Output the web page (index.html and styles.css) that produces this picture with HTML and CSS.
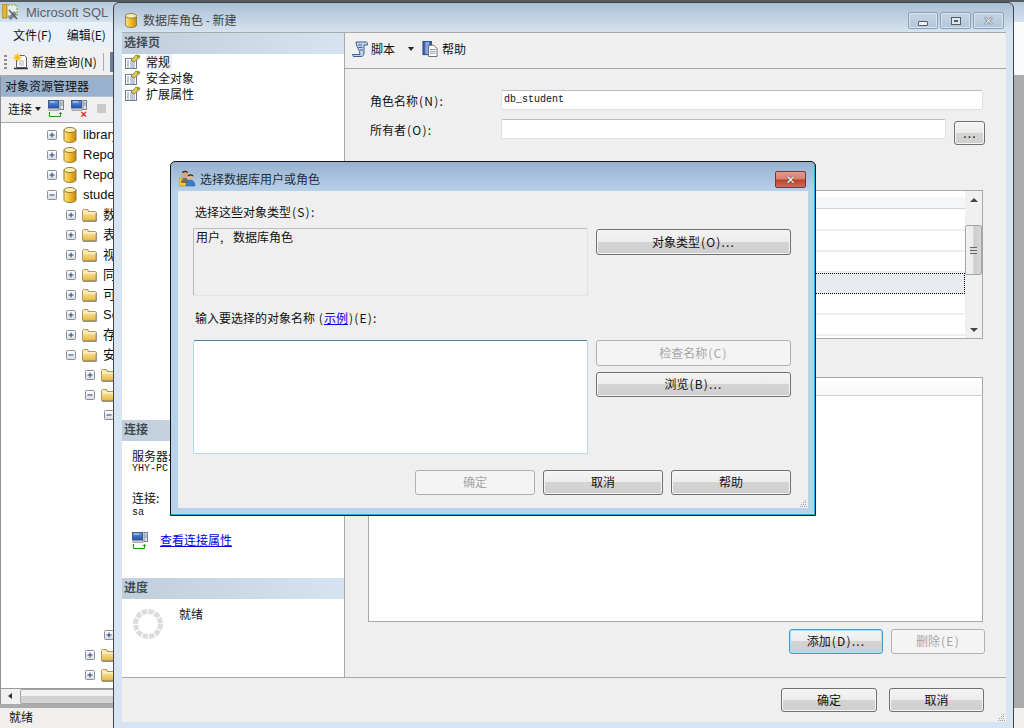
FILE: index.html
```html
<!DOCTYPE html>
<html lang="zh-CN">
<head>
<meta charset="utf-8">
<title>数据库角色 - 新建</title>
<link rel="stylesheet" href="styles.css">
</head>
<body>
<svg class="defs" width="0" height="0" aria-hidden="true">
  <defs>
    <linearGradient id="gold" x1="0" x2="1" y1="0" y2="0"><stop offset="0" stop-color="#f9e48e"/><stop offset=".45" stop-color="#f3bf2c"/><stop offset="1" stop-color="#c58a10"/></linearGradient>
    <linearGradient id="fold" x1="0" x2="0" y1="0" y2="1"><stop offset="0" stop-color="#fdf1c0"/><stop offset="1" stop-color="#e9b93f"/></linearGradient>
    <linearGradient id="expb" x1="0" x2="0" y1="0" y2="1"><stop offset="0" stop-color="#fff"/><stop offset="1" stop-color="#d8dbe0"/></linearGradient>
    <linearGradient id="scr" x1="0" x2="0" y1="0" y2="1"><stop offset="0" stop-color="#5d9be6"/><stop offset="1" stop-color="#1d4fb0"/></linearGradient>
    <symbol id="db" viewBox="0 0 13 16"><path d="M.5 3v10c0 1.4 2.7 2.5 6 2.5s6-1.100 6-2.500V3z" fill="url(#gold)" stroke="#8d7a43"/><ellipse cx="6.500" cy="3" rx="6" ry="2.500" fill="#fbeeb0" stroke="#8d7a43"/></symbol>
    <symbol id="folder" viewBox="0 0 15 13"><path d="M1 12.500V2l1-1h4l1 2h7l.5 1v8.500z" fill="#2a2418"/><path d="M.5 11.500V1.500l1-1h4l1 2h7l.5.500v8.500z" fill="url(#fold)" stroke="#b1975a"/><path d="M1 4h13" stroke="#fff8dc"/></symbol>
    <symbol id="plus" viewBox="0 0 10 10"><rect x=".5" y=".5" width="9" height="9" rx="1" fill="url(#expb)" stroke="#8b8f97"/><path d="M2.500 5h5M5 2.500v5" stroke="#27407f"/></symbol>
    <symbol id="minus" viewBox="0 0 10 10"><rect x=".5" y=".5" width="9" height="9" rx="1" fill="url(#expb)" stroke="#8b8f97"/><path d="M2.500 5h5" stroke="#27407f"/></symbol>
    <symbol id="prop" viewBox="0 0 16 16"><rect x=".5" y="4.500" width="11" height="10" fill="#fff" stroke="#6d7d94"/><path d="M2 7h2M5 7h5M2 9h2M5 9h5M2 11h2M5 11h5M2 13h2M5 13h5" stroke="#7d93bd"/><path d="M6 6l5-5 4 1-1 2-5 4z" fill="#e7c64a" stroke="#6f6a2b" stroke-width=".7"/><path d="M11 1l4 1-2 2z" fill="#7aa33a"/></symbol>
    <symbol id="conn" viewBox="0 0 16 12"><rect x=".5" y=".5" width="10" height="7.500" fill="url(#scr)" stroke="#4a5a78"/><path d="M2 2h5" stroke="#cfe4ff"/><rect x="1" y="8.500" width="10" height="2" fill="#c8ccd4" stroke="#7c8496" stroke-width=".6"/><rect x="12" y=".5" width="3.500" height="9" fill="#e2e5ea" stroke="#79808e"/><path d="M13 3h1.500M13 5h1.500" stroke="#3a6fb8"/></symbol>
    <symbol id="arrowlink" viewBox="0 0 16 5"><path d="M1.500 0v4.500h11V1" fill="none" stroke="#1c9a12"/><path d="M10.500 2l2-2 2 2z" fill="#1c9a12"/></symbol>
    <symbol id="scrolli" viewBox="0 0 16 16"><path d="M4 1h10c1 0 1.500.7 1.500 1.500V4H12v8c0 1.800-1 3.500-3 3.500H2C.8 15.500.5 14.500.5 13.500H8c0-5-4-7-4-12.500z" fill="#c4d3ea" stroke="#3f5e8f"/><path d="M6 4h4M6.500 6.500h4M8 9h3" stroke="#3f5e8f"/></symbol>
    <symbol id="helpi" viewBox="0 0 16 17"><rect x=".5" y=".5" width="9" height="14" fill="#3f66ae" stroke="#2b4683"/><rect x="3" y="1" width="4" height="13" fill="#8aa7d8"/><path d="M6.500 4.500h5.500l3.500 3.500v8.500h-9z" fill="#fff" stroke="#5c6677"/><path d="M8 9h6M8 11h6M8 13h6" stroke="#8f98a8"/></symbol>
    <symbol id="people" viewBox="0 0 17 17"><rect x="0" y="8" width="7" height="8" rx="1" fill="#f0c93c" stroke="#a08720" stroke-width=".6"/><circle cx="6" cy="4" r="3.200" fill="#d9a779"/><path d="M3 3c0-3 6-3 6 0l-3-1z" fill="#32241a"/><path d="M2 13c0-3 2-5 4-5s4 2 4 5z" fill="#7a6a50"/><circle cx="11.500" cy="7" r="2.800" fill="#e5b68a"/><path d="M8.500 6.500c0-3 6-3 6 0l-3-1z" fill="#32241a"/><path d="M7 16c0-3.500 2-6 4.500-6s4.500 2.500 4.500 6z" fill="#3f7cc6" stroke="#2a5a99" stroke-width=".5"/></symbol>
    <symbol id="appi" viewBox="0 0 16 16"><rect x="3" y="1" width="12" height="11" fill="#e9efe2" stroke="#79a04a" stroke-dasharray="2 1"/><rect x="0" y="0" width="5" height="14" fill="#e4b331" stroke="#8c7526" stroke-width=".7"/><path d="M6 14l6-7 3 3-6 6z" fill="#7e8794"/><path d="M7 6l8 9" stroke="#555d68" stroke-width="1.500"/></symbol>
    <symbol id="newq" viewBox="0 0 16 17"><path d="M3.500 2.500h8l2 2v10h-10z" fill="#fff" stroke="#59616e"/><path d="M1 15.500h14" stroke="#2e343c" stroke-width="1.500"/><path d="M6 8h5M6 10h5M6 12h5" stroke="#aab2bf"/><circle cx="4.500" cy="4.500" r="3" fill="#f6d43c"/><path d="M4.500 0v9M0 4.500h9M1.500 1.500l6 6M7.500 1.500l-6 6" stroke="#f2b71f" stroke-width=".8"/></symbol>
    <symbol id="grip" viewBox="0 0 7 7"><path d="M5 0h1v1H5zM3 2h1v1H3zM5 2h1v1H5zM1 4h1v1H1zM3 4h1v1H3zM5 4h1v1H5zM0 6h1v1H0zM2 6h1v1H2zM4 6h1v1H4zM6 6h1v1H6z" fill="#9c9c9c"/></symbol>
  </defs>
</svg>

<section class="win app">
  <header class="app-title">
    <svg class="ic16"><use href="#appi"/></svg>
    <span class="app-name">Microsoft SQL</span>
  </header>
  <nav class="app-menu"><span>文件(F)</span><span>编辑(E)</span></nav>
  <div class="app-tools">
    <span class="gripper"></span>
    <svg class="ic-newq"><use href="#newq"/></svg>
    <span>新建查询(N)</span>
    <span class="tool-sep"></span>
  </div>
  <div class="app-body">
    <aside class="explorer">
      <div class="exp-head">对象资源管理器</div>
      <div class="exp-tools">
        <span>连接</span><span class="caret"></span>
        <span class="conn-ic"><svg class="ic-conn"><use href="#conn"/></svg><svg class="ic-arrow"><use href="#arrowlink"/></svg></span>
        <span class="conn-ic"><svg class="ic-conn"><use href="#conn"/></svg><span class="redx">×</span></span>
        <span class="stop"></span>
      </div>
      <div class="tree">
        <div class="row l1"><svg class="exp"><use href="#plus"/></svg><svg class="ic-db"><use href="#db"/></svg><span>library</span></div>
        <div class="row l1"><svg class="exp"><use href="#plus"/></svg><svg class="ic-db"><use href="#db"/></svg><span>ReportServer</span></div>
        <div class="row l1"><svg class="exp"><use href="#plus"/></svg><svg class="ic-db"><use href="#db"/></svg><span>ReportServerTempDB</span></div>
        <div class="row l1"><svg class="exp"><use href="#minus"/></svg><svg class="ic-db"><use href="#db"/></svg><span>student</span></div>
        <div class="row l2"><svg class="exp"><use href="#plus"/></svg><svg class="ic-fold"><use href="#folder"/></svg><span>数据库关系图</span></div>
        <div class="row l2"><svg class="exp"><use href="#plus"/></svg><svg class="ic-fold"><use href="#folder"/></svg><span>表</span></div>
        <div class="row l2"><svg class="exp"><use href="#plus"/></svg><svg class="ic-fold"><use href="#folder"/></svg><span>视图</span></div>
        <div class="row l2"><svg class="exp"><use href="#plus"/></svg><svg class="ic-fold"><use href="#folder"/></svg><span>同义词</span></div>
        <div class="row l2"><svg class="exp"><use href="#plus"/></svg><svg class="ic-fold"><use href="#folder"/></svg><span>可编程性</span></div>
        <div class="row l2"><svg class="exp"><use href="#plus"/></svg><svg class="ic-fold"><use href="#folder"/></svg><span>Service Broker</span></div>
        <div class="row l2"><svg class="exp"><use href="#plus"/></svg><svg class="ic-fold"><use href="#folder"/></svg><span>存储</span></div>
        <div class="row l2"><svg class="exp"><use href="#minus"/></svg><svg class="ic-fold"><use href="#folder"/></svg><span>安全性</span></div>
        <div class="row l3"><svg class="exp"><use href="#plus"/></svg><svg class="ic-fold"><use href="#folder"/></svg></div>
        <div class="row l3"><svg class="exp"><use href="#minus"/></svg><svg class="ic-fold"><use href="#folder"/></svg></div>
        <div class="row l4"><svg class="exp"><use href="#minus"/></svg></div>
        <div class="tree-gap"></div>
        <div class="row l4"><svg class="exp"><use href="#plus"/></svg></div>
        <div class="row l3"><svg class="exp"><use href="#plus"/></svg><svg class="ic-fold"><use href="#folder"/></svg></div>
        <div class="row l3"><svg class="exp"><use href="#plus"/></svg><svg class="ic-fold"><use href="#folder"/></svg></div>
      </div>
      <div class="hscroll"><span class="hs-arrow"></span><span class="hs-thumb"></span></div>
    </aside>
  </div>
  <footer class="app-status">就绪</footer>
</section>

<section class="win dlg">
  <header class="dlg-title">
    <div class="dlg-name">
      <svg class="ic-title"><use href="#db"/></svg>
      <span class="dlg-text">数据库角色 - 新建</span>
    </div>
    <div class="capbtns">
      <span class="capbtn"><span class="g-min"></span></span>
      <span class="capbtn wide"><span class="g-max"></span></span>
      <span class="capbtn wide g-x">✕</span>
    </div>
  </header>
  <div class="dlg-inner">
    <div class="dlg-main">
      <aside class="side">
        <h2 class="side-head">选择页</h2>
        <ul class="pages">
          <li class="page"><svg class="ic16"><use href="#prop"/></svg><span class="page-on">常规</span></li>
          <li class="page"><svg class="ic16"><use href="#prop"/></svg><span>安全对象</span></li>
          <li class="page"><svg class="ic16"><use href="#prop"/></svg><span>扩展属性</span></li>
        </ul>
        <h2 class="side-head">连接</h2>
        <div class="conn">
          <div class="conn-label">服务器:</div>
          <div class="conn-val">YHY-PC</div>
          <div class="conn-label second">连接:</div>
          <div class="conn-val sa">sa</div>
          <div class="conn-link">
            <span class="conn-ic"><svg class="ic-conn"><use href="#conn"/></svg><svg class="ic-arrow"><use href="#arrowlink"/></svg></span>
            <a class="link" href="#">查看连接属性</a>
          </div>
        </div>
        <h2 class="side-head">进度</h2>
        <div class="progress">
          <svg class="spinner" viewBox="0 0 30 30"><circle cx="15" cy="15" r="12.500" fill="none" stroke="#dcdcdc" stroke-width="5" stroke-dasharray="5.300 1.245"/></svg>
          <span class="progress-text">就绪</span>
        </div>
      </aside>
      <main class="pane">
        <div class="pane-tools">
          <svg class="ic16"><use href="#scrolli"/></svg>
          <span>脚本</span>
          <span class="caret script-caret"></span>
          <svg class="ic16 help-ic"><use href="#helpi"/></svg>
          <span>帮助</span>
        </div>
        <div class="form">
          <div class="f-row">
            <label class="f-label">角色名称<span class="la">(N):</span></label>
            <div class="input mono">db_student</div>
          </div>
          <div class="f-row owner">
            <label class="f-label">所有者<span class="la">(O):</span></label>
            <div class="input"></div>
            <button class="btn dots"><span class="la">...</span></button>
          </div>
          <div class="grid">
            <div class="grid-body">
              <div class="grid-head"></div>
              <div class="grid-row"></div>
              <div class="grid-row"></div>
              <div class="grid-row"></div>
              <div class="grid-row sel"></div>
              <div class="grid-row"></div>
              <div class="grid-row"></div>
            </div>
            <div class="vscroll">
              <span class="vs-btn"><span class="tri up"></span></span>
              <span class="vs-thumb"><span class="vs-lines"></span></span>
              <span class="vs-btn end"><span class="tri down"></span></span>
            </div>
          </div>
          <div class="list"><div class="list-head"></div></div>
          <div class="actions">
            <button class="btn act focus">添加<span class="la">(D)...</span></button>
            <button class="btn act" disabled>删除<span class="la">(E)</span></button>
          </div>
        </div>
      </main>
    </div>
    <footer class="dlg-foot">
      <button class="btn ok">确定</button>
      <button class="btn cancel">取消</button>
      <svg class="grip"><use href="#grip"/></svg>
    </footer>
  </div>
</section>

<section class="win sub">
  <header class="sub-title">
    <svg class="ic-people"><use href="#people"/></svg>
    <span class="sub-name">选择数据库用户或角色</span>
    <span class="sub-close">✕</span>
  </header>
  <div class="sub-inner">
    <div class="sub-grid">
      <div class="sub-label span">选择这些对象类型<span class="la">(S):</span></div>
      <div class="box readonly">用户<span class="comma">, </span>数据库角色</div>
      <button class="btn tall first">对象类型<span class="la">(O)...</span></button>
      <div class="sub-label span mid">输入要选择的对象名称 <span class="la">(</span><a class="link" href="#">示例</a><span class="la">)(E):</span></div>
      <div class="box names"></div>
      <div class="sub-stack">
        <button class="btn tall" disabled>检查名称<span class="la">(C)</span></button>
        <button class="btn">浏览<span class="la">(B)...</span></button>
      </div>
    </div>
    <div class="sub-foot">
      <button class="btn w120" disabled>确定</button>
      <button class="btn w120">取消</button>
      <button class="btn w120">帮助</button>
    </div>
    <svg class="grip sub-grip"><use href="#grip"/></svg>
  </div>
</section>
</body>
</html>
```
FILE: styles.css
```css
* { box-sizing: border-box; }
html, body { margin: 0; padding: 0; }
body {
  position: relative;
  width: 1024px;
  height: 728px;
  overflow: hidden;
  background: #fff;
  font: 12px/16px "Noto Sans CJK SC", "Liberation Sans", sans-serif;
  color: #111;
}
ul, h2 { margin: 0; padding: 0; list-style: none; }
.defs { position: absolute; }
svg { display: block; flex: none; }
.ic16 { width: 16px; height: 16px; }
.link { color: #0000ee; text-decoration: underline; }
.la { letter-spacing: 1.2px; margin-left: 1px; }
.comma { letter-spacing: 3.5px; }

.win { position: absolute; }

/* parent application window */
.app {
  left: 0; top: 0; width: 1024px; height: 728px;
  display: flex; flex-direction: column;
  background: #ababab;
}
.app-title {
  height: 22px; flex: none;
  display: flex; align-items: center; gap: 8px;
  padding-left: 2px;
  background: linear-gradient(#b7c9dc, #d5e2ef);
  border-top: 2px solid #555b63;
}
.app-name { font: 13px "Liberation Sans", sans-serif; color: #5a5f66; white-space: nowrap; }
.app-menu {
  height: 25px; flex: none;
  display: flex; align-items: center; gap: 15px;
  padding-left: 13px;
  background: linear-gradient(90deg, #e9f0f7 0 900px, #fafafa 900px);
}
.app-tools {
  height: 28px; flex: none;
  display: flex; align-items: center;
  padding: 1px 0 0 4px;
  background: linear-gradient(90deg, #f0f0f0 0 900px, #fafafa 900px);
}
.gripper { width: 3px; height: 14px; margin-right: 6px; background: repeating-linear-gradient(#8a8f96 0 2px, transparent 2px 4px); }
.ic-newq { width: 16px; height: 17px; margin-right: 3px; }
.tool-sep { width: 1px; height: 18px; margin: 0 6px; background: #aab; box-shadow: 8px 0 0 1px #6a7ea0; }
.app-body { flex: 1; min-height: 0; display: flex; padding-bottom: 4px; }
.explorer {
  width: 340px;
  display: flex; flex-direction: column;
  border-left: 1px solid #8b9198;
  margin-top: 2px;
  background: #f0f0f0;
}
.exp-head { height: 20px; flex: none; padding-left: 4px; line-height: 17px; background: #98b2ce; border-bottom: 1px solid #b6c4d2; }
.exp-tools {
  height: 26px; flex: none;
  display: flex; align-items: center;
  padding: 0 0 2px 7px;
  border-bottom: 1px solid #a8a8a8;
}
.caret { width: 0; height: 0; margin-left: 3px; border: 3px solid transparent; border-top: 4px solid #222; border-bottom: 0; }
.conn-ic { position: relative; display: block; width: 16px; height: 17px; flex: none; }
.exp-tools .conn-ic { margin-left: 7px; }
.ic-conn { width: 16px; height: 12px; }
.ic-arrow { width: 16px; height: 5px; }
.redx { position: absolute; right: 0; bottom: -3px; font: bold 11px/11px "Liberation Sans", sans-serif; color: #e0201a; }
.stop { width: 9px; height: 9px; margin-left: 10px; background: #c9c9c9; }
.tree { flex: 1; min-height: 0; overflow: hidden; padding-top: 2px; background: #fff; font-family: "Liberation Sans", "Noto Sans CJK SC", sans-serif; font-size: 13px; }
.row { height: 20px; display: flex; align-items: center; white-space: nowrap; }
.row span { margin-left: 6px; }
.l1 { padding-left: 46px; }
.l2 { padding-left: 65px; }
.l3 { padding-left: 84px; }
.l4 { padding-left: 103px; }
.tree-gap { height: 200px; }
.exp { width: 10px; height: 10px; margin-right: 6px; }
.ic-db { width: 14px; height: 16px; }
.ic-fold { width: 15px; height: 13px; }
.hscroll { height: 16px; flex: none; display: flex; border-top: 1px solid #9a9a9a; background: #f0f0f0; }
.hs-arrow { width: 19px; position: relative; }
.hs-arrow::after { content: ""; position: absolute; left: 7px; top: 4px; border: 3.5px solid transparent; border-right: 4px solid #333; border-left: 0; }
.hs-thumb { flex: 1; border: 1px solid #a5a5a5; border-radius: 2px; background: linear-gradient(#f2f2f2, #f0f0f0 45%, #cfcfcf 50%, #d6d6d6); }
.app-status { height: 20px; flex: none; padding-left: 9px; line-height: 18px; background: #f1eeee; }

/* main dialog */
.dlg {
  left: 113px; top: 2px; width: 901px; height: 727px;
  padding: 0 7px 6px 8px;
  border: 1px solid #3f444c;
  border-radius: 6px 6px 0 0;
  background: linear-gradient(#aabfd4, #d7e4f1 30px);
  display: flex; flex-direction: column;
}
.dlg-title {
  height: 29px; flex: none;
  display: flex; justify-content: space-between; align-items: flex-start;
  padding: 9px 2px 0 3px;
}
.dlg-name { height: 17px; display: flex; align-items: center; gap: 6px; color: #444; }
.dlg-text { line-height: 15px; margin-top: -2px; }
.ic-title { width: 12px; height: 15px; }
.capbtns { display: flex; gap: 2px; }
.capbtn {
  width: 30px; height: 17px;
  display: flex; align-items: center; justify-content: center;
  border: 1px solid #8ba0b8; border-radius: 2px;
  background: linear-gradient(#c4d4e4, #b3c7da);
  box-shadow: inset 0 0 0 1px #d9e4ee;
}
.capbtn.wide { width: 31px; }
.g-min { width: 10px; height: 5px; margin-top: 5px; background: #eef2f6; border: 1px solid #555c66; border-radius: 1px; }
.g-max { width: 10px; height: 8px; background: #dfe6ee; border: 1px solid #555c66; box-shadow: inset 0 0 0 2px #dfe6ee, inset 0 0 0 3px #555c66; }
.g-x { font: bold 12px/1 "DejaVu Sans", sans-serif; color: #eef2f6; text-shadow: 0 0 1px #333, 0 0 1px #333; }
.dlg-inner { height: 690px; flex: none; display: flex; flex-direction: column; background: #efefef; border-top: 1px solid #a6abb0; }
.dlg-main { flex: 1; min-height: 0; display: flex; border-bottom: 1px solid #a8a8a8; }

.side { width: 223px; flex: none; display: flex; flex-direction: column; background: #fff; border-right: 1px solid #a8a8a8; }
.side-head { height: 21px; flex: none; padding-left: 2px; font-size: 12px; line-height: 18px; font-weight: 700; color: #3f4a55; background: linear-gradient(90deg, #c0cedc, #d6e3f0); }
.pages { flex: 1; min-height: 0; padding: 0 0 0 3px; }
.page { height: 16px; display: flex; align-items: center; gap: 5px; }
.page-on { background: #f0f0f0; padding-right: 2px; }
.conn { height: 137px; flex: none; padding: 8px 0 0 10px; }
.conn-label { height: 14px; line-height: 14px; }
.conn-label.second { margin-top: 18px; }
.conn-val { height: 10px; font: 10px/12px "Liberation Mono", monospace; }
.conn-val.sa { height: 12px; line-height: 15px; }
.conn-link { margin-top: 15px; height: 16px; display: flex; align-items: center; gap: 12px; }
.progress { height: 78px; flex: none; display: flex; gap: 16px; padding: 7px 0 0 11px; }
.spinner { width: 30px; height: 30px; margin-top: 3px; }

.pane { flex: 1; min-width: 0; display: flex; flex-direction: column; }
.pane-tools {
  height: 36px; flex: none;
  display: flex; align-items: center; gap: 3px;
  padding: 0 0 3px 7px;
  background: #f0f0f0;
  border-bottom: 1px solid #a8a8a8;
}
.script-caret { margin-left: 10px; border-width: 3.5px; border-top-width: 4px; border-bottom: 0; }
.help-ic { margin-left: 5px; margin-right: 1px; }
.form { flex: 1; min-height: 0; display: flex; flex-direction: column; padding: 21px 23px 0; }
.f-row { display: flex; height: 20px; flex: none; }
.f-row.owner { margin-top: 9px; height: 26px; }
.f-label { width: 133px; flex: none; line-height: 22px; padding-left: 2px; }
.input { flex: 1; height: 20px; padding-left: 2px; background: #fff; border: 1px solid #dde0e4; border-top-color: #b9bdc2; border-radius: 2px; }
.mono { font: 10px/17px "Liberation Mono", monospace; }
.btn {
  display: block;
  height: 25px;
  padding: 0 0 1px;
  font: 12px/16px "Noto Sans CJK SC", "Liberation Sans", sans-serif;
  color: #111;
  border: 1px solid #707070;
  border-radius: 3px;
  background: linear-gradient(#f4f4f4, #ececec 48%, #d4d4d4 50%, #cfcfcf);
  box-shadow: inset 0 0 0 1px #f6f6f6;
}
.btn:disabled { color: #a6a6a6; border-color: #adb2b5; background: #f4f4f4; box-shadow: none; }
.btn.dots { width: 31px; height: 24px; margin: 2px -2px 0 8px; }
.grid { height: 149px; margin-top: 45px; flex: none; display: flex; border: 1px solid #a8a8a8; background: #fff; }
.grid-body { flex: 1; min-width: 0; padding-top: 6px; }
.grid-head { height: 12px; margin-bottom: 1px; background: #f5f6f8; border-bottom: 1px solid #d4d4d4; }
.grid-row { height: 21px; border-bottom: 2px solid #eee; }
.grid-row.sel { background: #e8ecf0; outline: 1px dotted #000; outline-offset: -1px; border-bottom: 0; }
.vscroll { width: 17px; flex: none; display: flex; flex-direction: column; background: #f0f0f0; }
.vs-btn { height: 17px; flex: none; display: flex; align-items: center; justify-content: center; }
.vs-btn.end { margin-top: auto; }
.tri { width: 0; height: 0; border: 4px solid transparent; }
.tri.up { border-bottom: 4px solid #444; border-top: 0; }
.tri.down { border-top: 4px solid #444; border-bottom: 0; }
.vs-thumb {
  height: 50px; margin-top: 17px; flex: none;
  display: flex; align-items: center; justify-content: center;
  border: 1px solid #a5a5a5; border-radius: 2px;
  background: linear-gradient(90deg, #f2f2f2, #ececec 45%, #cccccc 55%, #d8d8d8);
}
.vs-lines { width: 7px; height: 7px; background: repeating-linear-gradient(#666 0 1px, #ddd 1px 3px); }
.list { height: 245px; margin-top: 38px; flex: none; background: #fff; border: 1px solid #a8a8a8; }
.list-head { height: 18px; background: linear-gradient(#fff, #f6f6f6); border-bottom: 1px solid #d0d0d0; }
.actions { display: flex; gap: 8px; justify-content: flex-end; margin: 7px -2px 0 0; }
.btn.act { width: 94px; }
.btn.focus { border-color: #3c9fd6; box-shadow: inset 0 0 0 1px #a6e1f5; }
.dlg-foot { position: relative; height: 44px; flex: none; display: flex; justify-content: flex-end; gap: 12px; padding: 10px 22px 0 0; }
.btn.ok { width: 96px; height: 24px; }
.btn.cancel { width: 95px; height: 24px; }
.grip { position: absolute; right: 1px; bottom: 1px; width: 7px; height: 7px; }

/* picker dialog */
.sub {
  left: 170px; top: 161px; width: 646px; height: 355px;
  padding: 0 7px 7px;
  border: 1px solid #161616;
  border-radius: 5px 5px 0 0;
  background: linear-gradient(#97b2cf, #b9d2ec 30px);
  box-shadow: inset -1px -1px 0 #2ab0d8;
  display: flex; flex-direction: column;
}
.sub-title { position: relative; height: 29px; flex: none; display: flex; align-items: center; gap: 3px; padding: 4px 0 0 1px; }
.ic-people { width: 17px; height: 17px; }
.sub-name { color: #1f2d3d; margin-left: 1px; }
.sub-close {
  position: absolute; right: 2px; top: 9px;
  width: 31px; height: 17px;
  display: flex; align-items: center; justify-content: center;
  font: bold 12px/1 "DejaVu Sans", sans-serif; color: #fff;
  text-shadow: 0 0 1px #333, 0 0 1px #333;
  border: 1px solid #6b3a3a; border-radius: 2px;
  background: linear-gradient(#e39a8d, #d97f70 48%, #b8402a 52%, #cf6c5c);
}
.sub-inner { position: relative; flex: 1; min-height: 0; padding: 13px 17px 0 15px; background: #efefef; }
.sub-grid { display: grid; grid-template-columns: 395px 195px; column-gap: 8px; grid-template-rows: 24px 68px 44px 114px; }
.sub-label { line-height: 16px; padding-left: 2px; }
.sub-label.span { grid-column: 1 / -1; }
.sub-label.mid { align-self: center; }
.box { padding: 0 2px; border-radius: 2px; }
.readonly { background: #efefef; border: 1px solid #b9bcbf; border-bottom-color: #dfe2e6; border-right-color: #dfe2e6; }
.names { background: #fff; border: 1px solid #b2d6ec; border-top-color: #54809f; }
.btn.tall { height: 26px; }
.btn.first { margin-top: 1px; }
.sub-stack { display: flex; flex-direction: column; gap: 6px; }
.sub-foot { display: flex; justify-content: flex-end; gap: 8px; margin-top: 16px; }
.btn.w120 { width: 120px; }
.sub-grip { right: 1px; bottom: 1px; }
```
